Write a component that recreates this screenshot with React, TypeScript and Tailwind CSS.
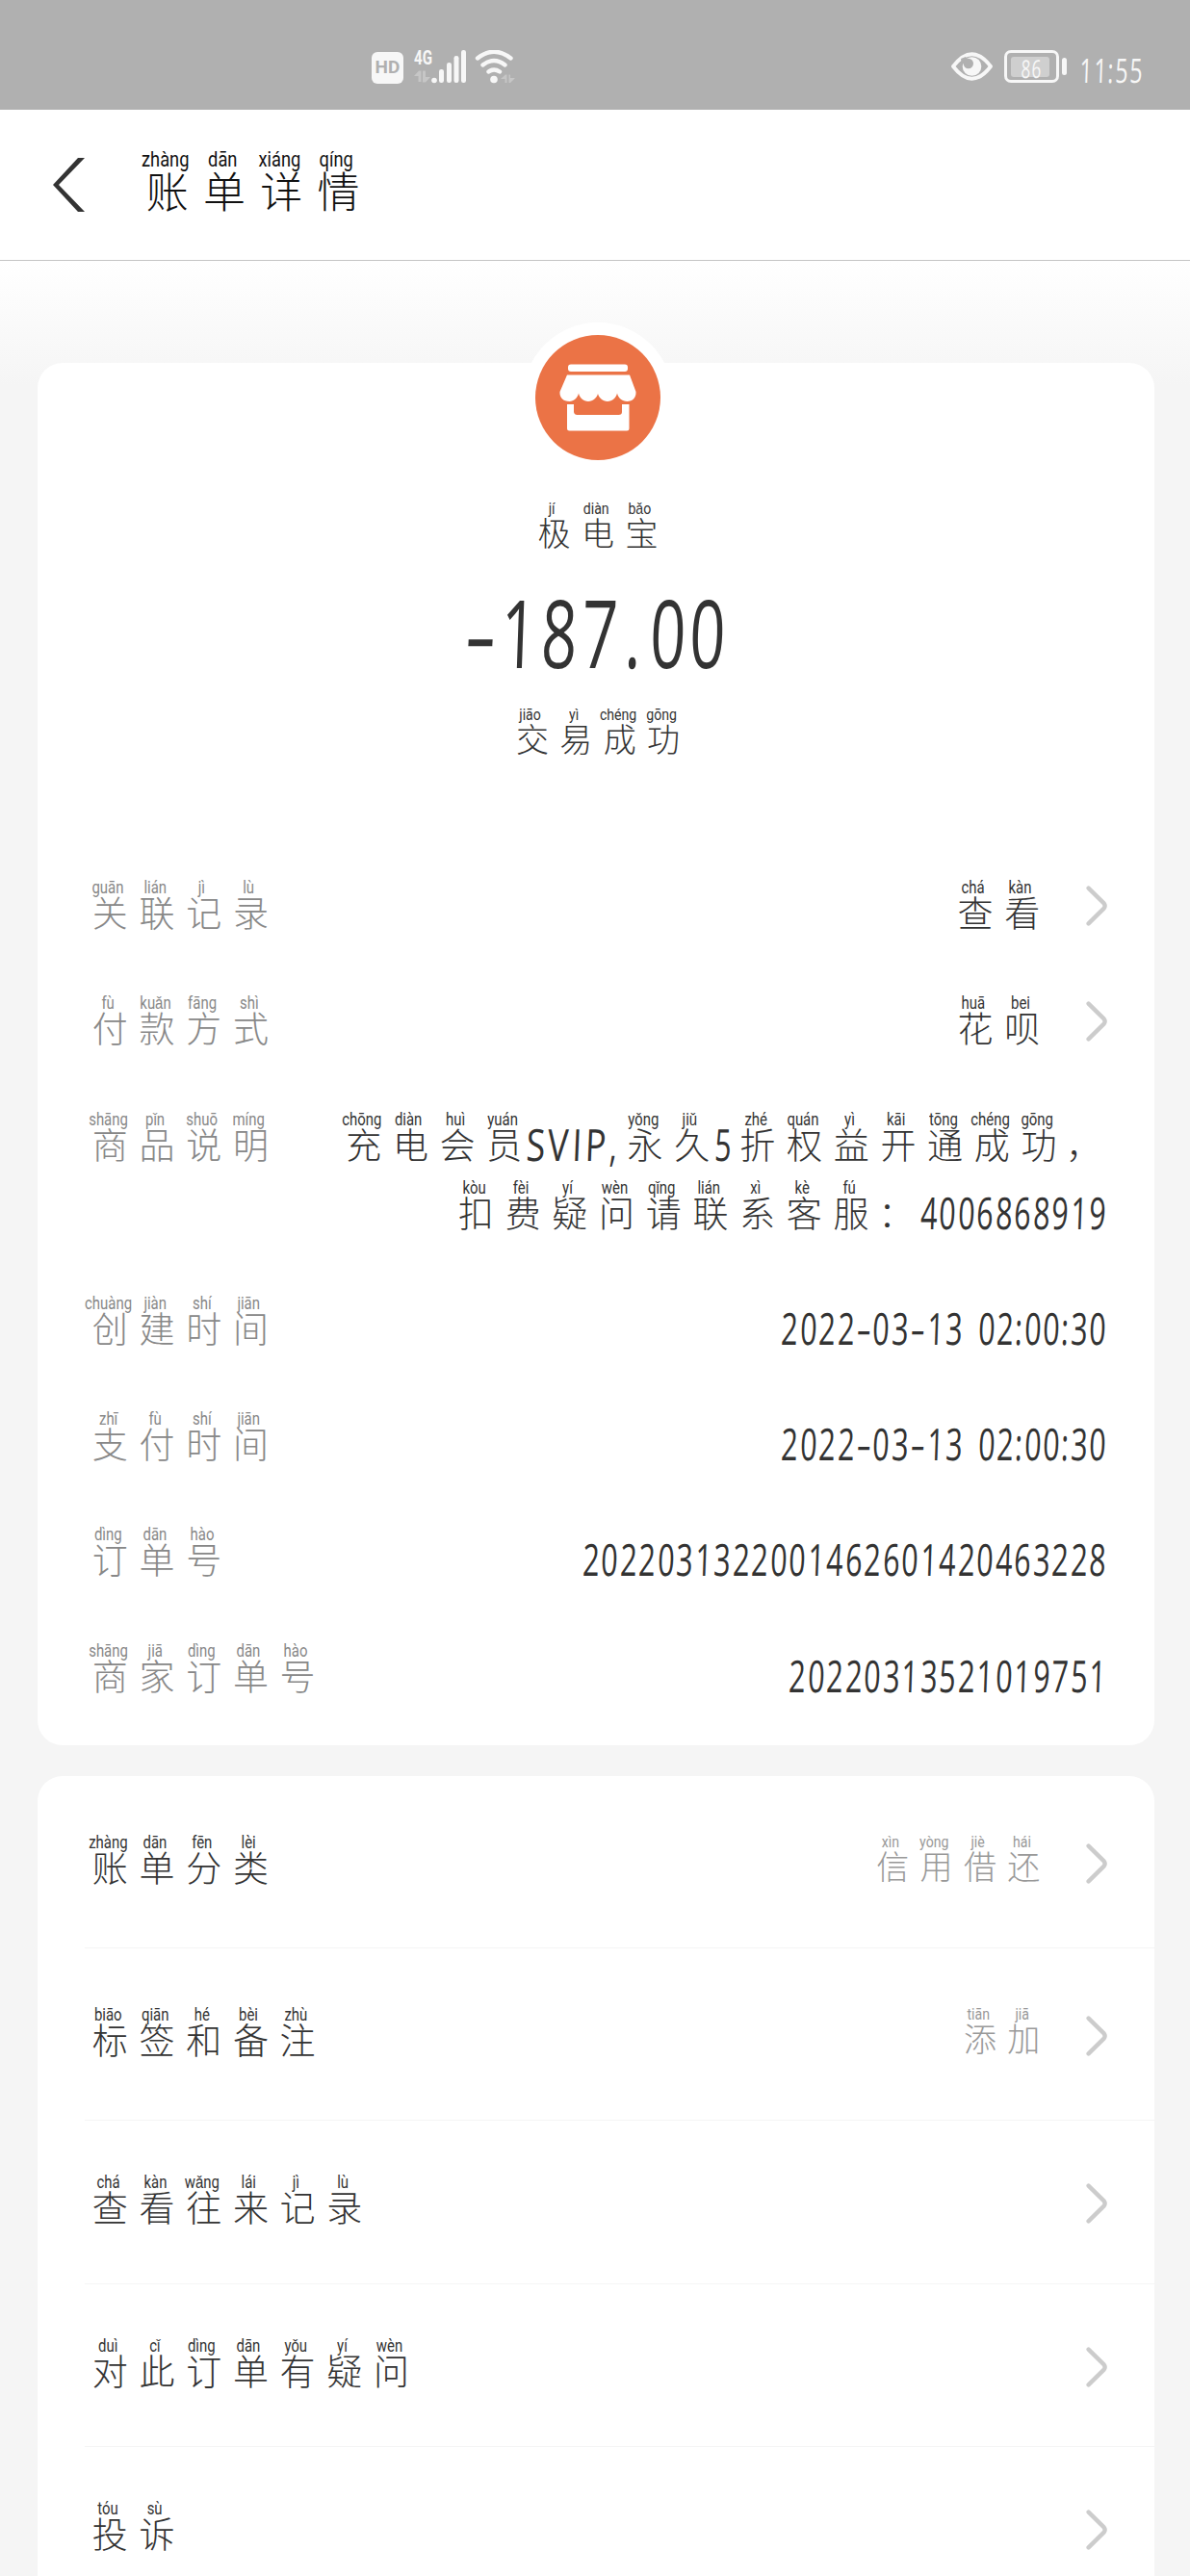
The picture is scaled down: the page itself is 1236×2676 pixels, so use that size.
import { clsx } from "clsx";

type Row = { label: string; value?: string; arrow?: boolean };

const PINYIN: Record<string, string> = {
  账: "zhàng", 单: "dān", 详: "xiáng", 情: "qíng", 极: "jí", 电: "diàn", 宝: "bǎo",
  交: "jiāo", 易: "yì", 成: "chéng", 功: "gōng", 关: "guān", 联: "lián", 记: "jì", 录: "lù",
  付: "fù", 款: "kuǎn", 方: "fāng", 式: "shì", 商: "shāng", 品: "pǐn", 说: "shuō", 明: "míng",
  创: "chuàng", 建: "jiàn", 时: "shí", 间: "jiān", 支: "zhī", 订: "dìng", 号: "hào", 家: "jiā",
  查: "chá", 看: "kàn", 花: "huā", 呗: "bei", 充: "chōng", 会: "huì", 员: "yuán", 永: "yǒng",
  久: "jiǔ", 折: "zhé", 权: "quán", 益: "yì", 开: "kāi", 通: "tōng", 扣: "kòu", 费: "fèi",
  疑: "yí", 问: "wèn", 请: "qǐng", 系: "xì", 客: "kè", 服: "fú", 分: "fēn", 类: "lèi",
  信: "xìn", 用: "yòng", 借: "jiè", 还: "hái", 标: "biāo", 签: "qiān", 和: "hé", 备: "bèi",
  注: "zhù", 添: "tiān", 加: "jiā", 往: "wǎng", 来: "lái", 对: "duì", 此: "cǐ", 有: "yǒu",
  投: "tóu", 诉: "sù",
};

// advance widths of the narrow latin glyphs, in em
const ADVANCE: Record<string, number> = {
  "-": 0.376, ":": 0.196, " ": 0.304, ".": 0.304, ",": 0.3, S: 0.47, V: 0.5, I: 0.38, P: 0.47,
};

const DETAILS: Row[] = [
  { label: "关联记录", value: "查看", arrow: true },
  { label: "付款方式", value: "花呗", arrow: true },
  { label: "商品说明", value: "充电会员SVIP,永久5折权益开通成功，\n扣费疑问请联系客服：4006868919" },
  { label: "创建时间", value: "2022-03-13 02:00:30" },
  { label: "支付时间", value: "2022-03-13 02:00:30" },
  { label: "订单号", value: "2022031322001462601420463228" },
  { label: "商家订单号", value: "20220313521019751" },
];

const ACTIONS: Row[] = [
  { label: "账单分类", value: "信用借还" },
  { label: "标签和备注", value: "添加" },
  { label: "查看往来记录" },
  { label: "对此订单有疑问" },
  { label: "投诉" },
];

const SIZES = {
  title: { cell: "w-[59.3px]", py: "text-[22px] leading-[20px]", han: "text-[44px] leading-[42px]" },
  body: { cell: "w-[48.7px]", py: "text-[18px] leading-[16px]", han: "text-[37px] leading-[34px]" },
  small: { cell: "w-[45.4px]", py: "text-[17px] leading-[16px]", han: "text-[34px] leading-[34px]" },
};

function Latin({ text, size }: { text: string; size: number }) {
  return (
    <span className="flex font-['Open_Sans',sans-serif]">
      {[...text].map((ch, i) => (
        <span
          key={i}
          className="flex justify-center whitespace-pre"
          style={{ width: (ADVANCE[ch] ?? 0.424) * size, fontSize: size }}
        >
          <span
            className={clsx(
              "inline-block -skew-x-3",
              ch === "-" ? "scale-x-[1.05]" : /[A-Z]/.test(ch) ? "scale-x-[0.78]" : "scale-x-[0.66]"
            )}
          >
            {ch}
          </span>
        </span>
      ))}
    </span>
  );
}

function Hand({ text, size = "body", className }: { text: string; size?: keyof typeof SIZES; className?: string }) {
  const s = SIZES[size];
  const parts = text.match(/[\x20-\x7e]+|[^\x20-\x7e]/g) ?? [];
  return (
    <span className={clsx("flex items-end", className)}>
      {parts.map((part, i) =>
        /^[\x20-\x7e]/.test(part) ? (
          <span key={i} className="leading-[34px]">
            <Latin text={part} size={46} />
          </span>
        ) : (
          <span key={i} className={clsx("flex flex-col items-center whitespace-nowrap", s.cell)}>
            <span className={clsx("inline-block scale-x-[0.83] font-[Roboto,sans-serif]", s.py)}>{PINYIN[part]}</span>
            <span className={clsx("font-['Noto_Sans_CJK_SC',sans-serif] font-light", PINYIN[part] && "pl-1", s.han)}>{part}</span>
          </span>
        )
      )}
    </span>
  );
}

function Arrow() {
  return (
    <svg className="ml-[44px] h-[42px] w-[22px] shrink-0" viewBox="0 0 22 42" fill="none" stroke="#ccc" strokeWidth="4.4" strokeLinecap="round" strokeLinejoin="round">
      <path d="M2.6 2.6 18.6 18.4Q20.6 21 18.6 23.6L2.6 39.4" />
    </svg>
  );
}

function StatusBar() {
  return (
    <div className="flex h-[114px] items-start bg-[#b0b0b0] pt-[52px] text-[#f7f7f7]">
      <div className="ml-[386px] mt-[2px] flex h-[33px] w-[33px] items-center justify-center rounded-[6px] bg-[#f7f7f7] font-[Roboto,sans-serif] text-[19px] font-bold text-[#b0b0b0]">
        HD
      </div>
      <svg className="ml-[11px] h-[36px] w-[56px] overflow-visible" viewBox="0 0 56 36" fill="currentColor">
        <text x="0" y="15" fontSize="20" fontWeight="700" fontFamily="Roboto, sans-serif" textLength="19" lengthAdjust="spacingAndGlyphs">4G</text>
        <path d="M0 27 5 21.5h2.500V33H4.500v-6zM9 21.500h3V28h5l-5 5.500H9z" opacity=".3" />
        <circle cx="21" cy="31.500" r="2.800" />
        <rect x="26" y="20" width="5" height="14" rx="2.300" />
        <rect x="34" y="13" width="5" height="21" rx="2.300" />
        <rect x="41.500" y="6" width="5" height="28" rx="2.300" />
        <rect x="49" y="0" width="5" height="34" rx="2.300" />
      </svg>
      <svg className="ml-[7px] h-[36px] w-[44px]" viewBox="0 0 44 36" fill="none" stroke="currentColor" strokeWidth="4.400" strokeLinecap="round">
        <path d="M3 8.500Q20 -5 37.500 8.500M8.500 15.500Q20 6.500 31.500 15.500M14.500 22.500Q20 18.500 26 22.500" />
        <circle cx="20" cy="30.500" r="3.800" fill="currentColor" stroke="none" />
        <path d="M27 30 32 25.500h1.500V34H31.500v-4zM35.500 25.500h1.500V29h5l-5 5h-1.500z" fill="currentColor" stroke="none" opacity=".3" />
      </svg>
      <svg className="ml-[451px] mt-[2px] h-[30px] w-[43px]" viewBox="0 0 43 30" fill="none" stroke="currentColor" strokeWidth="3.800">
        <path d="M2 15Q21.500 -10.500 41 15Q21.500 40.500 2 15Z" strokeLinejoin="round" />
        <circle cx="21.500" cy="15" r="9.800" fill="currentColor" stroke="none" />
        <circle cx="17.800" cy="12" r="5.200" fill="#b0b0b0" stroke="none" />
        <path d="M10 7 15 5l3 4-7 4z" fill="#b0b0b0" stroke="none" />
      </svg>
      <div className="ml-[12px] flex items-center">
        <div className="relative h-[34px] w-[57px] rounded-[7px] border-[3px] border-[#f7f7f7] p-[4px]">
          <div className="h-[21px] w-[40px] rounded-[3px] bg-[#cfcfcf]" />
          <div className="absolute left-[14px] top-[3px] leading-[27px]">
            <Latin text="86" size={26} />
          </div>
        </div>
        <div className="ml-[3px] h-[18px] w-[5px] rounded-[2.5px] bg-[#f7f7f7]" />
      </div>
      <div className="ml-[13px] mt-[3px] leading-[36px]">
        <Latin text="11:55" size={35} />
      </div>
    </div>
  );
}

function ShopBadge() {
  return (
    <div className="absolute left-[504px] top-[-42px] flex size-[156px] items-center justify-center rounded-full bg-white">
      <svg className="size-[130px]" viewBox="0 0 130 130" fill="#fff">
        <circle cx="65" cy="65" r="65" fill="#eb7346" />
        <rect x="34" y="30.500" width="62" height="7.500" rx="3" />
        <path d="M33 41.500H98L104.500 59C105 65 101 69 95.500 69 90 69 86 65 85 60.500 84 65 80 69 75 69 70 69 66 65 65 61 64 65 60 69 55 69 50 69 46 65 45 60.500 44 65 40 69 35.500 69 29 69 25 65 25.500 59Z" />
        <path d="M33 72H40V80Q40.500 83 43.500 83H86.500Q90 83 90 80V72H97.500V97Q97.500 99.500 95 99.500H35.500Q33 99.500 33 97Z" />
      </svg>
    </div>
  );
}

export default function App() {
  return (
    <div className="h-[2676px] w-[1236px] overflow-hidden bg-[#f5f5f5] text-[#333]">
      <StatusBar />
      <header className="flex h-[157px] items-start border-b border-[#c4c4c4] bg-white pl-[55px] pt-[42px]">
        <svg className="mt-2 h-[56px] w-[33px]" viewBox="0 0 33 56" fill="#333">
          <path d="M26 0H33L6 28 33 56H26L0 28Z" />
        </svg>
        <Hand text="账单详情" size="title" className="ml-[54px] text-[#111]" />
      </header>

      <main className="bg-[linear-gradient(#fff,#f5f5f5_130px)] px-[39px] pt-[106px]">
        <section className="relative w-[1160px] rounded-[26px] bg-white pb-[56px] pl-[49px] pr-[49px]">
          <ShopBadge />
          <div className="flex flex-col items-center pt-[142.5px]">
            <Hand text="极电宝" size="small" />
            <div className="mt-[36px] leading-[100px]">
              <Latin text="-187.00" size={98} />
            </div>
            <Hand text="交易成功" size="small" className="mt-[28.5px]" />
          </div>
          <div className="mt-[130px] flex flex-col gap-[70.3px]">
            {DETAILS.map((row) => (
              <div key={row.label} className="flex items-start justify-between">
                <Hand text={row.label} className="text-[#888]" />
                <div className="flex items-start">
                  <div className="flex min-h-[50px] flex-col items-end justify-end gap-[21px]">
                    {row.value?.split("\n").map((line) => <Hand key={line} text={line} />)}
                  </div>
                  {row.arrow && (
                    <div className="mt-[6px] h-[42px]">
                      <Arrow />
                    </div>
                  )}
                </div>
              </div>
            ))}
          </div>
        </section>

        <section className="mt-[32.5px] w-[1160px] rounded-t-[26px] bg-white pl-[49px]">
          {ACTIONS.map((row, i) => (
            <div
              key={row.label}
              className={clsx(
                "flex items-center justify-between border-b border-[#f5f5f5] pr-[49px]",
                i < 2 ? "h-[179px]" : "h-[169.5px]"
              )}
            >
              <Hand text={row.label} className="-mt-[7px]" />
              <div className="mt-[3px] flex items-center">
                {row.value && <Hand text={row.value} size="small" className="-mt-[12px] text-[#999]" />}
                <Arrow />
              </div>
            </div>
          ))}
        </section>
      </main>
    </div>
  );
}
